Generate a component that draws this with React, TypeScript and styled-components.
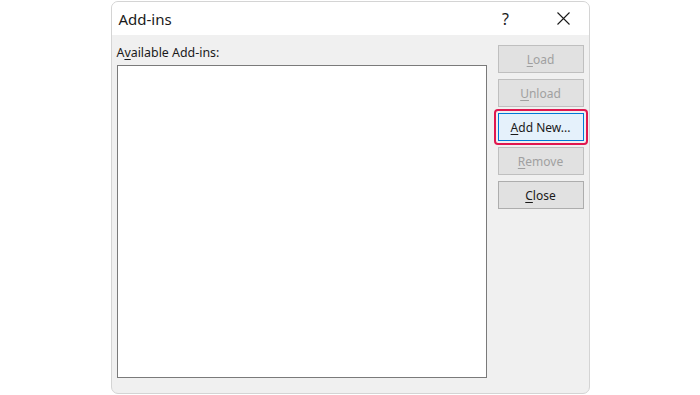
import React from 'react';
import styled, { createGlobalStyle } from 'styled-components';

const GlobalStyle = createGlobalStyle`
  html, body {
    margin: 0;
    padding: 0;
    background: #ffffff;
    font-family: "Segoe UI", "Noto Sans", "Liberation Sans", sans-serif;
  }
`;

const Page = styled.div`
  width: 700px;
  height: 395px;
  display: flex;
  justify-content: center;
  padding-top: 1px;
  box-sizing: border-box;
`;

const Dialog = styled.div`
  width: 479px;
  height: 393px;
  box-sizing: border-box;
  border: 1px solid #d4d4d4;
  border-radius: 7px;
  background: #f0f0f0;
  overflow: hidden;
  display: flex;
  flex-direction: column;
`;

const TitleBar = styled.div`
  height: 33px;
  background: #ffffff;
  display: flex;
  align-items: center;
  padding-left: 7px;
  flex-shrink: 0;
`;

const Title = styled.div`
  flex: 1;
  font-size: 15px;
  color: #1a1a1a;
`;

const TitleButton = styled.div<{ $width: number }>`
  width: ${(p) => p.$width}px;
  height: 33px;
  display: flex;
  align-items: center;
  justify-content: center;
  font-size: 16px;
  color: #1a1a1a;
`;

const Body = styled.div`
  flex: 1;
  display: flex;
  padding: 10px 5px 15px 5px;
  gap: 11px;
`;

const ListColumn = styled.div`
  display: flex;
  flex-direction: column;
  width: 370px;
`;

const Label = styled.div`
  font-size: 12.4px;
  color: #1a1a1a;
  height: 20px;
  line-height: 16px;
`;

const ListBox = styled.div`
  flex: 1;
  background: #ffffff;
  border: 1px solid #7a7a7a;
`;

const ButtonColumn = styled.div`
  display: flex;
  flex-direction: column;
  gap: 6px;
  width: 86px;
`;

const Button = styled.button<{ $disabled?: boolean; $focused?: boolean }>`
  display: block;
  height: 28px;
  width: 86px;
  box-sizing: border-box;
  font-family: inherit;
  font-size: 12px;
  padding: 0;
  border-radius: 0;
  outline: none;
  border: 1px solid ${(p) => (p.$focused ? '#0078d7' : p.$disabled ? '#bfbfbf' : '#adadad')};
  background: ${(p) => (p.$focused ? '#e5f1fb' : '#e1e1e1')};
  color: ${(p) => (p.$disabled ? '#a0a0a0' : '#1a1a1a')};
`;

const FocusRing = styled.div`
  margin: -4px;
  padding: 2px;
  border: 2px solid #e0174f;
  border-radius: 4px;
`;

const Key = styled.span`
  text-decoration: underline;
  text-underline-offset: 2px;
`;

export default function App() {
  return (
    <>
      <GlobalStyle />
      <Page>
        <Dialog>
          <TitleBar>
            <Title>Add-ins</Title>
            <TitleButton $width={66}>?</TitleButton>
            <TitleButton $width={50}>
              <svg width="13" height="13" viewBox="0 0 13 13">
                <path d="M0.5 0.5 L12.5 12.5 M12.5 0.5 L0.5 12.5" stroke="#1a1a1a" strokeWidth="1.1" fill="none" />
              </svg>
            </TitleButton>
          </TitleBar>
          <Body>
            <ListColumn>
              <Label>
                A<Key>v</Key>ailable Add-ins:
              </Label>
              <ListBox />
            </ListColumn>
            <ButtonColumn>
              <Button $disabled>
                <Key>L</Key>oad
              </Button>
              <Button $disabled>
                <Key>U</Key>nload
              </Button>
              <FocusRing>
                <Button $focused>
                  <Key>A</Key>dd New...
                </Button>
              </FocusRing>
              <Button $disabled>
                <Key>R</Key>emove
              </Button>
              <Button>
                <Key>C</Key>lose
              </Button>
            </ButtonColumn>
          </Body>
        </Dialog>
      </Page>
    </>
  );
}
